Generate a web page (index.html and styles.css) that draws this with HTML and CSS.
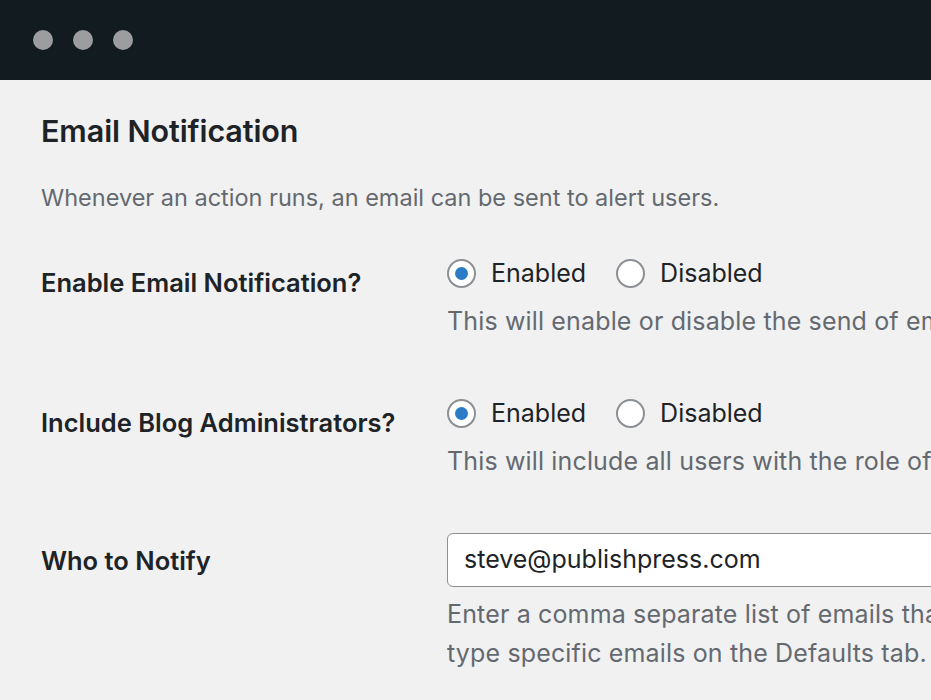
FILE: index.html
```html
<!DOCTYPE html>
<html lang="en">
<head>
    <meta charset="UTF-8">
    <meta name="viewport" content="width=device-width, initial-scale=1.0">
    <title>Email Notification</title>
    <link rel="stylesheet" href="styles.css">
</head>
<body>
    <div class="title-bar">
        <span class="dot"></span>
        <span class="dot"></span>
        <span class="dot"></span>
    </div>

    <div class="settings">
        <h2>Email Notification</h2>
        <p class="intro">Whenever an action runs, an email can be sent to alert users.</p>

        <div class="form-row">
            <div class="form-label">Enable Email Notification?</div>
            <div class="form-field">
                <div class="radios">
                    <label class="radio"><span class="radio-box checked"></span>Enabled</label>
                    <label class="radio"><span class="radio-box"></span>Disabled</label>
                </div>
                <p class="description">This will enable or disable the send of email notifications.</p>
            </div>
        </div>

        <div class="form-row">
            <div class="form-label">Include Blog Administrators?</div>
            <div class="form-field">
                <div class="radios">
                    <label class="radio"><span class="radio-box checked"></span>Enabled</label>
                    <label class="radio"><span class="radio-box"></span>Disabled</label>
                </div>
                <p class="description">This will include all users with the role of Administrator.</p>
            </div>
        </div>

        <div class="form-row row-input">
            <div class="form-label">Who to Notify</div>
            <div class="form-field">
                <div class="text-input">steve@publishpress.com</div>
                <p class="description">Enter a comma separate list of emails that should be notified.<br>type specific emails on the Defaults tab.</p>
            </div>
        </div>
    </div>
</body>
</html>
```

FILE: styles.css
```css
:root {
    --bar-color: #121b1f;
    --text-color: #1d2327;
    --muted-color: #646970;
    --bg-color: #f1f1f1;
    --blue: #2b7bc6;
    --border-color: #8c8f94;
}

* {
    margin: 0;
    padding: 0;
    box-sizing: border-box;
}

body {
    background: var(--bg-color);
    color: var(--text-color);
    font-family: Inter, "Liberation Sans", Arial, sans-serif;
    overflow: hidden;
    height: 700px;
}

.title-bar {
    height: 80px;
    background: var(--bar-color);
    display: flex;
    align-items: center;
    gap: 20px;
    padding-left: 33px;
}

.dot {
    width: 20px;
    height: 20px;
    border-radius: 50%;
    background: #9b9d9f;
}

.settings {
    padding: 31px 0 0 41px;
}

.settings h2 {
    font-size: 30.5px;
    font-weight: 600;
    line-height: 40px;
    letter-spacing: -0.1px;
}

.intro {
    margin-top: 31px;
    font-size: 23.5px;
    line-height: 32px;
    color: var(--muted-color);
    white-space: nowrap;
}

.form-row {
    display: grid;
    grid-template-columns: 406px 1fr;
    margin-top: 43px;
}

.form-row + .form-row {
    margin-top: 56px;
}

.form-label {
    font-size: 25.5px;
    font-weight: 600;
    padding-top: 10px;
    line-height: 32px;
    white-space: nowrap;
}

.radios {
    display: flex;
    gap: 30px;
    height: 32px;
    align-items: center;
}

.radio {
    display: flex;
    align-items: center;
    gap: 15px;
    font-size: 25px;
    color: var(--text-color);
}

.radio-box {
    width: 29px;
    height: 29px;
    border: 2px solid var(--border-color);
    border-radius: 50%;
    background: #fff;
    display: flex;
    align-items: center;
    justify-content: center;
}

.radio-box.checked::before {
    content: "";
    width: 13px;
    height: 13px;
    border-radius: 50%;
    background: var(--blue);
}

.description {
    margin-top: 13px;
    font-size: 25px;
    letter-spacing: 0.15px;
    line-height: 39px;
    color: var(--muted-color);
    white-space: nowrap;
}

.form-row + .row-input {
    margin-top: 52px;
}

.row-input .form-label {
    padding-top: 12px;
}

.text-input {
    width: 600px;
    height: 54px;
    background: #fff;
    border: 1.5px solid var(--border-color);
    border-radius: 6px;
    padding: 0 16px;
    font-size: 25px;
    line-height: 51px;
    color: var(--text-color);
}

.row-input .description {
    margin-top: 8px;
}
```
